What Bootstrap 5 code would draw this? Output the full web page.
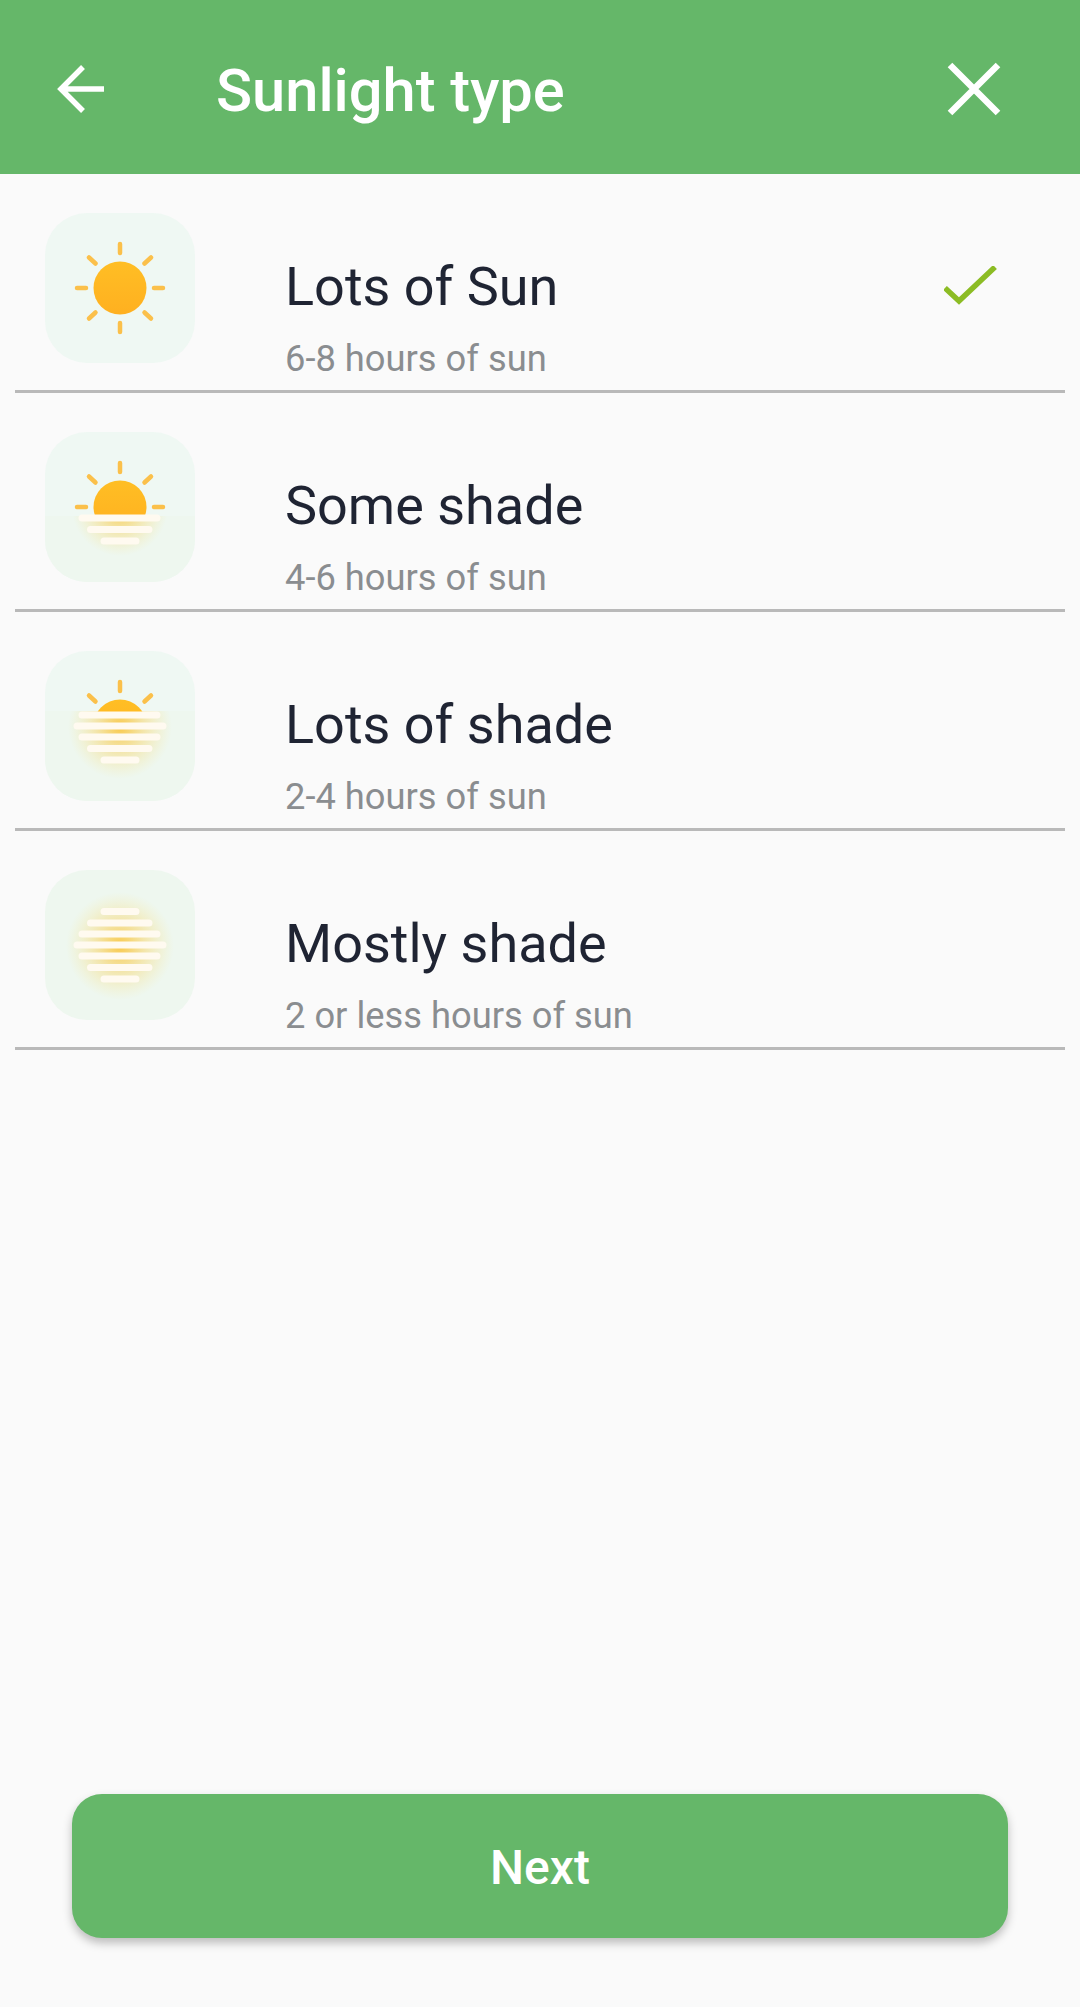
<!doctype html>
<html lang="en">
<head>
<meta charset="utf-8">
<title>Sunlight type</title>
<link href="https://cdn.jsdelivr.net/npm/bootstrap@5.3.0/dist/css/bootstrap.min.css" rel="stylesheet">
<style>
  body { background: #fafafa; font-family: Roboto, "Liberation Sans", sans-serif; }
  .screen { min-height: 2007px; }
  .app-bar { height: 174px; background: #65b769; color: #fff; padding: 3px 79px 0 56px; }
  .app-bar svg { flex: none; }
  .bar-title { font-size: 59.6px; font-weight: 500; line-height: 1; margin: 6px 0 0 108px; }
  .sun-row { height: 219px; margin: 0 15px; padding: 39px 0 0 30px; border-bottom: 3px solid #b9b9b9; }
  .sun-tile { width: 150px; height: 150px; flex: none; }
  .sun-text { padding-top: 43px; margin-left: 90px; }
  .sun-name { font-size: 54px; line-height: 61px; color: #1f2433; }
  .sun-hours { font-size: 36.3px; line-height: 40px; color: #8a8d90; margin-top: 22px; }
  .sun-check { position: absolute; left: 929px; top: 92px; }
  .next-wrap { padding: 0 72px 69px; }
  .next-btn { height: 144px; border: 0; border-radius: 30px; background: #65b769; color: #fff; font-size: 48px; font-weight: 500; padding-top: 10px; box-shadow: 0 5px 10px rgba(0,0,0,.25); }
  .next-btn:hover { background: #65b769; color: #fff; }
</style>
</head>
<body>
<svg width="0" height="0" class="position-absolute">
  <defs>
    <linearGradient id="sunFill" x1="0" y1="0" x2="0" y2="1"><stop offset="0" stop-color="#ffbe24"/><stop offset="1" stop-color="#ffb020"/></linearGradient>
    <radialGradient id="sunGlow"><stop offset="0" stop-color="#fbc02d" stop-opacity=".85"/><stop offset=".42" stop-color="#fbc83c" stop-opacity=".42"/><stop offset="1" stop-color="#fbe27a" stop-opacity="0"/></radialGradient>
    <clipPath id="clipAbove86"><rect width="150" height="84"/></clipPath>
    <clipPath id="clipAbove63"><rect width="150" height="61"/></clipPath>
    <clipPath id="clipBelow84"><rect y="84" width="150" height="66"/></clipPath>
    <clipPath id="clipBelow60"><rect y="60" width="150" height="90"/></clipPath>
    <g id="raysTop" stroke="#fbc04a" stroke-width="4.500" stroke-linecap="round" fill="none">
      <path d="M75 31V40M44 44.500L50.500 50.500M106 44.500L99.500 50.500"/>
    </g>
    <g id="raysSide" stroke="#fbc04a" stroke-width="4.500" stroke-linecap="round" fill="none">
      <path d="M32 75H41M109 75H118"/>
    </g>
    <g id="raysLow" stroke="#fbc04a" stroke-width="4.500" stroke-linecap="round" fill="none">
      <path d="M75 110V119M44 105.500L50.500 99.500M106 105.500L99.500 99.500"/>
    </g>
    <g id="barsLow" stroke="#fffaf0" stroke-width="7" stroke-linecap="round" fill="none">
      <path d="M37 86H112M45.500 97.500H104M59 109H91"/>
    </g>
  </defs>
</svg>

<div class="screen d-flex flex-column">
  <header class="app-bar d-flex align-items-center">
    <svg width="52" height="52" viewBox="0 0 52 52" fill="none" stroke="#fff" stroke-width="5.500"><path d="M48 26H6M27 4L5 26L27 48"/></svg>
    <h1 class="bar-title flex-grow-1">Sunlight type</h1>
    <svg width="54" height="54" viewBox="0 0 54 54" fill="none" stroke="#fff" stroke-width="6.500"><path d="M3 3L51 51M51 3L3 51"/></svg>
  </header>

  <main class="flex-grow-1">
    <div class="sun-row d-flex position-relative">
      <svg class="sun-tile" viewBox="0 0 150 150">
        <rect width="150" height="150" rx="42" fill="#eff8f3"/>
        <use href="#raysTop"/><use href="#raysSide"/><use href="#raysLow"/>
        <circle cx="75" cy="75" r="26.500" fill="url(#sunFill)"/>
      </svg>
      <div class="sun-text">
        <div class="sun-name">Lots of Sun</div>
        <div class="sun-hours">6-8 hours of sun</div>
      </div>
      <svg class="sun-check" width="56" height="44" viewBox="0 0 56 44" fill="none" stroke="#8cbc24" stroke-width="5.500"><path d="M1 22L15 35L51 1"/></svg>
    </div>

    <div class="sun-row d-flex">
      <svg class="sun-tile" viewBox="0 0 150 150">
        <rect width="150" height="150" rx="42" fill="#eff8f3"/>
        <g clip-path="url(#clipBelow84)"><rect width="150" height="150" rx="42" fill="#eef7ef"/><circle cx="75" cy="76" r="48" fill="url(#sunGlow)"/></g>
        <use href="#raysTop"/><use href="#raysSide"/>
        <circle cx="75" cy="75" r="26.500" fill="url(#sunFill)" clip-path="url(#clipAbove86)"/>
        <use href="#barsLow"/>
      </svg>
      <div class="sun-text">
        <div class="sun-name">Some shade</div>
        <div class="sun-hours">4-6 hours of sun</div>
      </div>
    </div>

    <div class="sun-row d-flex">
      <svg class="sun-tile" viewBox="0 0 150 150">
        <rect width="150" height="150" rx="42" fill="#eff8f3"/>
        <g clip-path="url(#clipBelow60)"><rect width="150" height="150" rx="42" fill="#eef7ef"/><circle cx="75" cy="76" r="52" fill="url(#sunGlow)"/></g>
        <use href="#raysTop"/>
        <circle cx="75" cy="75" r="26.500" fill="url(#sunFill)" clip-path="url(#clipAbove63)"/>
        <g stroke="#fffaf0" stroke-width="7" stroke-linecap="round" fill="none"><path d="M37 64H112M32 75H118"/></g>
        <use href="#barsLow"/>
      </svg>
      <div class="sun-text">
        <div class="sun-name">Lots of shade</div>
        <div class="sun-hours">2-4 hours of sun</div>
      </div>
    </div>

    <div class="sun-row d-flex">
      <svg class="sun-tile" viewBox="0 0 150 150">
        <rect width="150" height="150" rx="42" fill="#eef7ef"/>
        <circle cx="75" cy="76" r="54" fill="url(#sunGlow)"/>
        <g stroke="#fffaf0" stroke-width="7" stroke-linecap="round" fill="none"><path d="M59 41.500H91M45.500 53H104M37 64H112M32 75H118"/></g>
        <use href="#barsLow"/>
      </svg>
      <div class="sun-text">
        <div class="sun-name">Mostly shade</div>
        <div class="sun-hours">2 or less hours of sun</div>
      </div>
    </div>
  </main>

  <div class="next-wrap">
    <button type="button" class="btn next-btn w-100">Next</button>
  </div>
</div>
<script src="https://cdn.jsdelivr.net/npm/bootstrap@5.3.0/dist/js/bootstrap.bundle.min.js"></script>
</body>
</html>
